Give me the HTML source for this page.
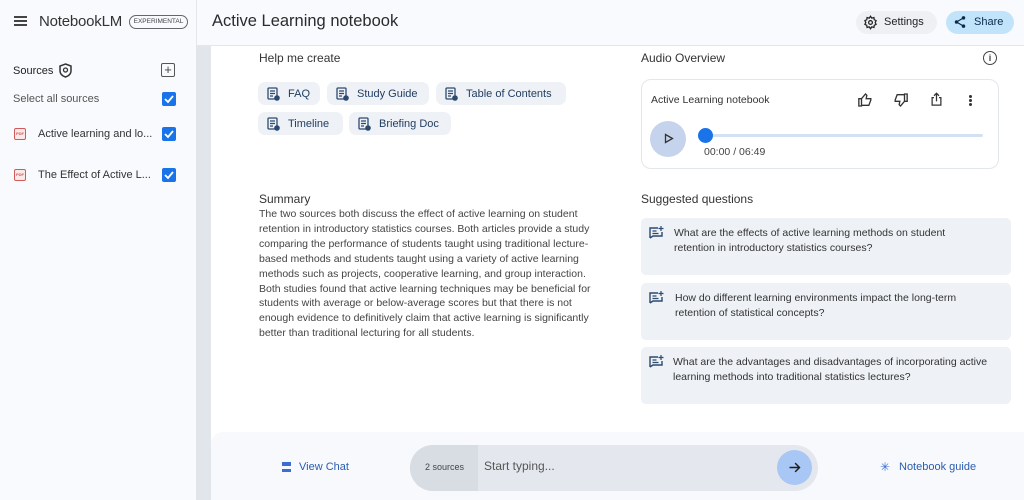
<!DOCTYPE html>
<html><head><meta charset="utf-8"><style>
*{margin:0;padding:0;box-sizing:border-box}
body{width:1024px;height:500px;overflow:hidden;background:#fff;font-family:"Liberation Sans",sans-serif;color:#1f1f1f;position:relative}
.a{position:absolute}
.side{left:0;top:0;width:196px;height:500px;background:#f8fafd}
.strip{left:196px;top:46px;width:15px;height:454px;background:#e2e6eb}
.hdr{left:196px;top:0;width:828px;height:46px;background:#f8fafd;border-bottom:1px solid #e3e6ea;border-left:1px solid #e3e6ea}
.cb{width:14px;height:14px;background:#1a73e8;border-radius:2px}
.cb svg{display:block}
.chip{height:23px;background:#eef2f7;border-radius:7px;font-size:11px;color:#1f3a5f;display:flex;align-items:center;padding-left:9px}
.chip svg{margin-right:8px}
.q{left:641px;width:370px;background:#eef1f5;border-radius:5px;font-size:10.5px;line-height:15px;color:#333}
.pdf{width:12px;height:12px;border:1.5px solid #d05a5a;border-radius:2px;font-size:4px;color:#d05a5a;text-align:center;line-height:9px;font-weight:bold;background:#fbe9e9}
</style></head><body>
<div class="a side"></div>
<div class="a strip"></div>
<div class="a hdr"></div>
<div class="a" style="left:14px;top:16px;width:13px;height:2px;background:#444;box-shadow:0 4px 0 #444,0 8px 0 #444"></div>
<div class="a" style="left:39px;top:13px;font-size:15px;color:#333;letter-spacing:-0.2px">NotebookLM</div>
<div class="a" style="left:129px;top:15px;width:59px;height:14px;border:1px solid #666;border-radius:8px;font-size:6.5px;text-align:center;line-height:12px;color:#444">EXPERIMENTAL</div>
<div class="a" style="left:212px;top:12px;font-size:16.5px;color:#2b2b2b">Active Learning notebook</div>
<div class="a" style="left:856px;top:11px;width:81px;height:23px;background:#eef0f3;border-radius:12px;font-size:11px;line-height:23px;padding-left:28px;color:#222">Settings</div>
<svg class="a" style="left:863px;top:15px" width="15" height="15" viewBox="0 0 24 24"><path d="M12 2l2 3 3.5-1 .5 3.5 3 1.5-1.5 3 1.5 3-3 1.5-.5 3.5-3.5-1-2 3-2-3-3.5 1-.5-3.5-3-1.5L4.5 12 3 9l3-1.5L6.5 4 10 5z" fill="none" stroke="#222" stroke-width="2"/><circle cx="12" cy="12" r="3" fill="none" stroke="#222" stroke-width="2"/></svg>
<div class="a" style="left:946px;top:11px;width:68px;height:23px;background:#c2e4fb;border-radius:12px;font-size:11px;line-height:23px;padding-left:28px;color:#0b2b4a">Share</div>
<svg class="a" style="left:953px;top:15px" width="14" height="14" viewBox="0 0 24 24"><circle cx="18" cy="5" r="3" fill="#0b2b4a"/><circle cx="6" cy="12" r="3" fill="#0b2b4a"/><circle cx="18" cy="19" r="3" fill="#0b2b4a"/><path d="M18 5L6 12l12 7" stroke="#0b2b4a" stroke-width="2" fill="none"/></svg>
<div class="a" style="left:13px;top:65px;font-size:11px;color:#222">Sources</div>
<svg class="a" style="left:59px;top:63px" width="13" height="15" viewBox="0 0 13 15"><path d="M6.5 1L12 3v5c0 3-2.5 5-5.5 6C3.5 13 1 11 1 8V3z" fill="none" stroke="#333" stroke-width="1.5"/><circle cx="6.5" cy="7" r="2" fill="none" stroke="#333" stroke-width="1.3"/></svg>
<div class="a" style="left:161px;top:63px;width:14px;height:14px;border:1.3px solid #555;border-radius:2px;font-size:13px;line-height:11px;text-align:center;color:#444">+</div>
<div class="a" style="left:13px;top:93px;font-size:11px;color:#555">Select all sources</div>
<div class="a cb" style="left:162px;top:92px"><svg width="14" height="14"><path d="M3 7l3 3 5-6" stroke="#fff" stroke-width="1.8" fill="none"/></svg></div>
<div class="a pdf" style="left:14px;top:128px">PDF</div>
<div class="a" style="left:38px;top:128px;font-size:11px;color:#333">Active learning and lo...</div>
<div class="a cb" style="left:162px;top:127px"><svg width="14" height="14"><path d="M3 7l3 3 5-6" stroke="#fff" stroke-width="1.8" fill="none"/></svg></div>
<div class="a pdf" style="left:14px;top:169px">PDF</div>
<div class="a" style="left:38px;top:169px;font-size:11px;color:#333">The Effect of Active L...</div>
<div class="a cb" style="left:162px;top:168px"><svg width="14" height="14"><path d="M3 7l3 3 5-6" stroke="#fff" stroke-width="1.8" fill="none"/></svg></div>
<div class="a" style="left:259px;top:51px;font-size:12px;color:#333">Help me create</div>
<div class="a chip" style="left:258px;top:82px;width:62px"><svg width="13" height="14" viewBox="0 0 13 14"><rect x="1" y="1" width="9" height="11" rx="1" fill="none" stroke="#2c4a6e" stroke-width="1.3"/><path d="M3 4h5M3 6.5h5M3 9h3" stroke="#2c4a6e" stroke-width="1.2"/><circle cx="10" cy="11" r="2.8" fill="#2c4a6e"/></svg>FAQ</div>
<div class="a chip" style="left:327px;top:82px;width:102px"><svg width="13" height="14" viewBox="0 0 13 14"><rect x="1" y="1" width="9" height="11" rx="1" fill="none" stroke="#2c4a6e" stroke-width="1.3"/><path d="M3 4h5M3 6.5h5M3 9h3" stroke="#2c4a6e" stroke-width="1.2"/><circle cx="10" cy="11" r="2.8" fill="#2c4a6e"/></svg>Study Guide</div>
<div class="a chip" style="left:436px;top:82px;width:130px"><svg width="13" height="14" viewBox="0 0 13 14"><rect x="1" y="1" width="9" height="11" rx="1" fill="none" stroke="#2c4a6e" stroke-width="1.3"/><path d="M3 4h5M3 6.5h5M3 9h3" stroke="#2c4a6e" stroke-width="1.2"/><circle cx="10" cy="11" r="2.8" fill="#2c4a6e"/></svg>Table of Contents</div>
<div class="a chip" style="left:258px;top:112px;width:85px"><svg width="13" height="14" viewBox="0 0 13 14"><rect x="1" y="1" width="9" height="11" rx="1" fill="none" stroke="#2c4a6e" stroke-width="1.3"/><path d="M3 4h5M3 6.5h5M3 9h3" stroke="#2c4a6e" stroke-width="1.2"/><circle cx="10" cy="11" r="2.8" fill="#2c4a6e"/></svg>Timeline</div>
<div class="a chip" style="left:349px;top:112px;width:102px"><svg width="13" height="14" viewBox="0 0 13 14"><rect x="1" y="1" width="9" height="11" rx="1" fill="none" stroke="#2c4a6e" stroke-width="1.3"/><path d="M3 4h5M3 6.5h5M3 9h3" stroke="#2c4a6e" stroke-width="1.2"/><circle cx="10" cy="11" r="2.8" fill="#2c4a6e"/></svg>Briefing Doc</div>
<div class="a" style="left:259px;top:192px;font-size:12px;color:#333">Summary</div>
<div class="a" style="left:259px;top:207px;font-size:10.5px;line-height:14.9px;color:#444;white-space:nowrap">The two sources both discuss the effect of active learning on student<br>retention in introductory statistics courses. Both articles provide a study<br>comparing the performance of students taught using traditional lecture-<br>based methods and students taught using a variety of active learning<br>methods such as projects, cooperative learning, and group interaction.<br>Both studies found that active learning techniques may be beneficial for<br>students with average or below-average scores but that there is not<br>enough evidence to definitively claim that active learning is significantly<br>better than traditional lecturing for all students.</div>
<div class="a" style="left:641px;top:51px;font-size:12px;color:#333">Audio Overview</div>
<div class="a" style="left:983px;top:51px;width:14px;height:14px;border:1.3px solid #444;border-radius:50%;font-size:9px;text-align:center;line-height:12px;color:#444;font-weight:bold">i</div>
<div class="a" style="left:641px;top:79px;width:358px;height:90px;border:1px solid #e3e6ea;border-radius:10px"></div>
<div class="a" style="left:651px;top:94px;font-size:10.5px;color:#333">Active Learning notebook</div>
<svg class="a" style="left:857px;top:92px" width="17" height="16" viewBox="0 0 24 24"><path d="M2 10h4v11H2zM6 20h11l3-8v-2h-7l1-5-2-2-6 7" fill="none" stroke="#333" stroke-width="2"/></svg>
<svg class="a" style="left:892px;top:92px" width="17" height="16" viewBox="0 0 24 24"><path d="M22 14h-4V3h4zM18 4H7l-3 8v2h7l-1 5 2 2 6-7" fill="none" stroke="#333" stroke-width="2"/></svg>
<svg class="a" style="left:929px;top:91px" width="15" height="17" viewBox="0 0 24 24"><path d="M8 9H5v12h14V9h-3M12 15V2M8 6l4-4 4 4" fill="none" stroke="#333" stroke-width="2"/></svg>
<div class="a" style="left:969px;top:95px;width:3px;height:3px;background:#333;border-radius:50%;box-shadow:0 4px 0 #333,0 8px 0 #333"></div>
<div class="a" style="left:650px;top:121px;width:36px;height:36px;border-radius:50%;background:#c5d3ec"></div>
<svg class="a" style="left:664px;top:133px" width="10" height="11"><path d="M1.5 1.5l7 4-7 4z" fill="none" stroke="#333" stroke-width="1.3"/></svg>
<div class="a" style="left:705px;top:134px;width:278px;height:3px;background:#d5e1f3;border-radius:2px"></div>
<div class="a" style="left:698px;top:128px;width:15px;height:15px;border-radius:50%;background:#1a73e8"></div>
<div class="a" style="left:704px;top:146px;font-size:10.5px;color:#444">00:00 / 06:49</div>
<div class="a" style="left:641px;top:192px;font-size:12px;color:#333">Suggested questions</div>
<div class="a q" style="top:218px;height:57px;padding:8px 0 0 33px">What are the effects of active learning methods on student<br>retention in introductory statistics courses?</div>
<div class="a q" style="top:283px;height:57px;padding:8px 0 0 34px">How do different learning environments impact the long-term<br>retention of statistical concepts?</div>
<div class="a q" style="top:347px;height:57px;padding:8px 0 0 32px">What are the advantages and disadvantages of incorporating active<br>learning methods into traditional statistics lectures?</div>
<svg class="a" style="left:649px;top:226px" width="15" height="14" viewBox="0 0 15 14"><path d="M1 12V2h8M1 12l3-2h9V6" fill="none" stroke="#2c4a6e" stroke-width="1.4"/><path d="M3.5 5h4M3.5 7.5h6" stroke="#2c4a6e" stroke-width="1.2"/><path d="M12 0v5M9.5 2.5h5" stroke="#2c4a6e" stroke-width="1.2"/></svg>
<svg class="a" style="left:649px;top:291px" width="15" height="14" viewBox="0 0 15 14"><path d="M1 12V2h8M1 12l3-2h9V6" fill="none" stroke="#2c4a6e" stroke-width="1.4"/><path d="M3.5 5h4M3.5 7.5h6" stroke="#2c4a6e" stroke-width="1.2"/><path d="M12 0v5M9.5 2.5h5" stroke="#2c4a6e" stroke-width="1.2"/></svg>
<svg class="a" style="left:649px;top:355px" width="15" height="14" viewBox="0 0 15 14"><path d="M1 12V2h8M1 12l3-2h9V6" fill="none" stroke="#2c4a6e" stroke-width="1.4"/><path d="M3.5 5h4M3.5 7.5h6" stroke="#2c4a6e" stroke-width="1.2"/><path d="M12 0v5M9.5 2.5h5" stroke="#2c4a6e" stroke-width="1.2"/></svg>
<div class="a" style="left:211px;top:432px;width:813px;height:68px;background:#f7f9fc;border-top-left-radius:12px"></div>
<div class="a" style="left:282px;top:462px;width:9px;height:10px;border-top:4px solid #3a6fd0;border-bottom:3px solid #3a6fd0"></div>
<div class="a" style="left:299px;top:461px;font-size:11px;color:#2a5db0">View Chat</div>
<div class="a" style="left:410px;top:445px;width:408px;height:46px;background:#e4e8ee;border-radius:23px;overflow:hidden"><div style="width:68px;height:46px;background:#d8dde4"></div></div>
<div class="a" style="left:425px;top:462px;font-size:9px;color:#444">2 sources</div>
<div class="a" style="left:484px;top:459px;font-size:12px;color:#555">Start typing...</div>
<div class="a" style="left:777px;top:450px;width:35px;height:35px;border-radius:50%;background:#a8c7f5"></div>
<svg class="a" style="left:787px;top:460px" width="15" height="15" viewBox="0 0 24 24"><path d="M4 12h15M13 5l7 7-7 7" fill="none" stroke="#1f1f1f" stroke-width="2.3"/></svg>
<div class="a" style="left:880px;top:460px;font-size:12px;color:#3a6fd0">✳</div>
<div class="a" style="left:899px;top:461px;font-size:11px;color:#2a5db0">Notebook guide</div>
</body></html>
